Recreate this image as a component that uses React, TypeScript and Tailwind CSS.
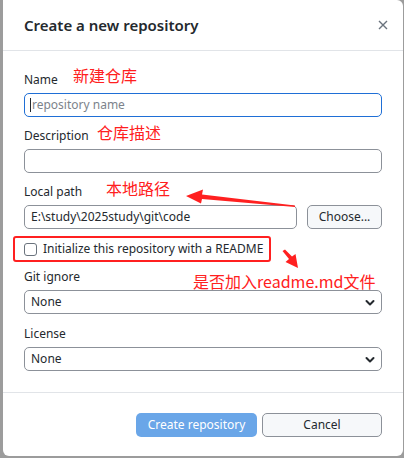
import React from "react";

const ui = { fontFamily: '"Noto Sans", "Open Sans", Arial, sans-serif' };
const cjk = { fontFamily: '"Noto Sans CJK SC", "Noto Sans", sans-serif' };

const Chevron = () => (
    <svg width="10" height="10" viewBox="0 0 10 10" className="absolute right-[6px] top-[7px]">
        <path d="M1.5 3 L5 6.5 L8.5 3" fill="none" stroke="#24292e" strokeWidth="2" strokeLinecap="round" strokeLinejoin="round" />
    </svg>
);

const Field = ({ label, children, gap = "mb-[11px]" }: { label: string; children: React.ReactNode; gap?: string }) => (
    <div className={gap}>
        <div className="h-4 leading-4 mb-[5px] text-[12px] text-[#24292e]">{label}</div>
        {children}
    </div>
);

const Select = ({ value }: { value: string }) => (
    <div className="relative h-6 rounded-[5px] border border-[#8c9199] bg-white pl-[6px] text-[12px] leading-[22px] text-[#24292e]">
        {value}
        <Chevron />
    </div>
);

export default function App() {
    return (
        <div className="w-[404px] h-[458px] bg-[#9c9c9c] pl-[3px] pr-px pb-[2px] overflow-hidden" style={ui}>
            <div className="relative h-full bg-white rounded-tr-[6px] rounded-b-[6px] flex flex-col">
                <div className="h-[51px] border-b border-[#e1e4e8] flex items-center justify-between pl-[21px] pr-[15px]">
                    <h1 className="text-[15px] font-semibold text-[#24292e]">Create a new repository</h1>
                    <svg width="10" height="10" viewBox="0 0 10 10">
                        <path d="M1 1 L9 9 M9 1 L1 9" stroke="#6a737d" strokeWidth="1.4" />
                    </svg>
                </div>

                <div className="px-[21px] pt-[21px] pb-[21px] border-b border-[#e1e4e8]">
                    <Field label="Name">
                        <div className="h-6 rounded-[5px] border-[1.5px] border-[#1f6fd6] flex items-center pl-[5px] text-[12px] text-[#7d838b]">
                            <span className="w-px h-[14px] bg-[#24292e] mr-px" />
                            repository name
                        </div>
                    </Field>
                    <Field label="Description">
                        <div className="h-6 rounded-[5px] border border-[#8c9199]" />
                    </Field>
                    <Field label="Local path" gap="">
                        <div className="flex gap-[10px]">
                            <div className="flex-1 h-6 rounded-[5px] border border-[#8c9199] pl-[6px] text-[12px] leading-[22px] text-[#24292e]">
                                E:\study\2025study\git\code
                            </div>
                            <div className="w-[75px] h-6 rounded-[5px] border border-[#8c9199] bg-[#f6f8fa] text-center text-[12px] leading-[22px] text-[#24292e]">
                                Choose...
                            </div>
                        </div>
                    </Field>
                    <div className="h-[40px] flex items-center text-[12px] text-[#24292e]">
                        <span className="w-[13px] h-[13px] rounded-[3px] border border-[#6a737d] mr-[6px]" />
                        Initialize this repository with a README
                    </div>
                    <Field label="Git ignore" gap="mb-[12px]">
                        <Select value="None" />
                    </Field>
                    <Field label="License" gap="">
                        <Select value="None" />
                    </Field>
                </div>

                <div className="flex justify-end gap-[5px] px-[21px] pt-[20px]">
                    <div className="w-[121px] h-6 rounded-[5px] bg-[#6aa6e8] text-white text-center text-[12px] leading-6">
                        Create repository
                    </div>
                    <div className="w-[120px] h-6 rounded-[5px] border border-[#8c9199] bg-[#f6f8fa] text-center text-[12px] leading-[22px] text-[#24292e]">
                        Cancel
                    </div>
                </div>

                {/* annotations drawn over the dialog */}
                <div className="absolute left-[70px] top-[65px] text-[16px] leading-5 text-[#ff2020]" style={cjk}>新建仓库</div>
                <div className="absolute left-[94px] top-[122px] text-[16px] leading-5 text-[#ff2020]" style={cjk}>仓库描述</div>
                <div className="absolute left-[103px] top-[178px] text-[16px] leading-5 text-[#ff2020]" style={cjk}>本地路径</div>
                <div className="absolute left-[190px] top-[271px] text-[16px] leading-5 text-[#ff2020]" style={cjk}>是否加入readme.md文件</div>
                <div className="absolute left-[10px] top-[236px] w-[258px] h-[26px] border-2 border-[#ff2020] rounded-[3px]" />
                <svg className="absolute left-0 top-0" width="400" height="456" viewBox="0 0 400 456">
                    <polygon points="292,205.5 199,194.5 200,189.5 183,196 198,203.5 199,199 292,207" fill="#ff2020" />
                    <polygon points="279.5,251 286,259 282.5,262 295,268 292.5,254 289,256.5 282,249.5" fill="#ff2020" />
                </svg>
            </div>
        </div>
    );
}
